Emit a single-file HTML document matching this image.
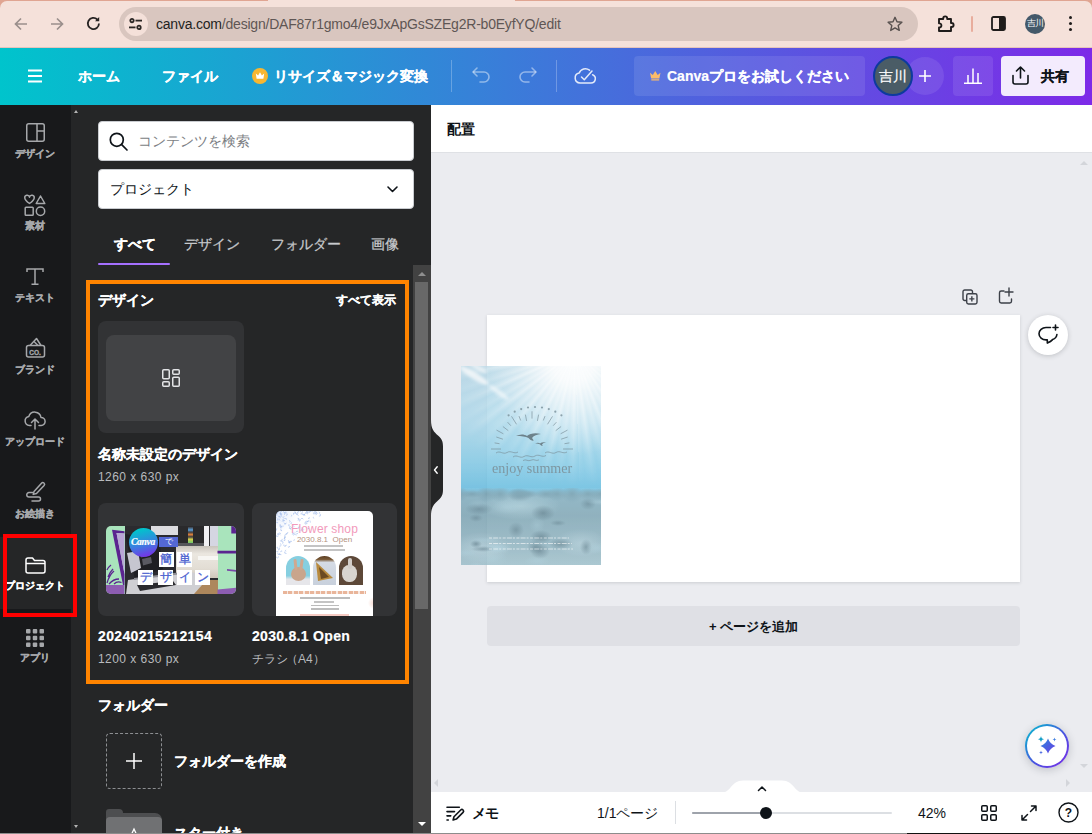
<!DOCTYPE html>
<html lang="ja">
<head>
<meta charset="utf-8">
<title>Canva</title>
<style>
*{box-sizing:border-box;margin:0;padding:0}
html,body{width:1092px;height:834px;overflow:hidden;background:#ebecf0}
body{font-family:"Liberation Sans",sans-serif;position:relative;color:#0e1318}
.a{position:absolute}
.t{position:absolute;white-space:nowrap;line-height:1}
svg{position:absolute;overflow:visible}
/* browser chrome */
#chrome{left:0;top:0;width:1092px;height:48px;background:#e0a592}
#chrome .bg{left:0;top:1px;width:1092px;height:47px;background:#f5e1da;border-radius:7px 7px 0 0}
#pill{left:119px;top:7px;width:799px;height:34px;border-radius:17px;background:#d9c6bf}
#tune{left:124px;top:12px;width:24px;height:24px;border-radius:50%;background:#f4e0d9}
/* canva header */
#hdr{left:0;top:48px;width:1092px;height:57px;z-index:5;background:linear-gradient(90deg,#00c4cc 0%,#7d2ae8 100%)}
#hdr .t{color:#fff;font-weight:bold;font-size:14px;-webkit-text-stroke:.2px currentColor}
.hb{position:absolute;background:rgba(255,255,255,.095);border-radius:4px}
/* nav */
#nav{left:0;top:104px;width:72px;height:729px;background:linear-gradient(90deg,#18191b 71px,#252627 71px)}
#nav .t{font-size:10px;font-weight:bold;color:#a6a8ab;width:72px;text-align:center;left:-1px;margin-top:1px;-webkit-text-stroke:.3px currentColor}
#panel{left:72px;top:104px;width:359px;height:729px;overflow:hidden;background:#252627}
#panel .t{color:#fff}
#panel .t[style*="bold"]{-webkit-text-stroke:.2px currentColor}
.card{position:absolute;background:#323335;border-radius:8px;overflow:hidden}
.tb{position:absolute;width:15px;height:15px;background:#fff;color:#4a5fd0;font-size:12px;line-height:15px;text-align:center;-webkit-text-stroke:.3px currentColor}
/* canvas */
#tb{left:431px;top:104px;width:661px;height:49px;background:#fff;border-bottom:1px solid #dfe1e5}
#bb{left:431px;top:792px;width:661px;height:41px;background:#fff}
#foot{left:0;top:833px;width:1092px;height:1px;background:#8c8c8c}
</style>
</head>
<body>
<!-- ================= BROWSER CHROME ================= -->
<div id="chrome" class="a">
  <div class="a bg"></div>
  <div class="a" style="left:0;top:47px;width:1092px;height:1px;background:#e6c4bb"></div>
  <div class="a" style="left:268px;top:0;width:247px;height:2px;background:#f5e1da"></div>
  <div id="pill" class="a"></div>
  <div id="tune" class="a"></div>
  <!-- back -->
  <svg style="left:14px;top:17px" width="14" height="14" viewBox="0 0 14 14" fill="none" stroke="#9a8f8c" stroke-width="1.7"><path d="M13 7H2M7 1.5L1.5 7 7 12.5"/></svg>
  <!-- forward -->
  <svg style="left:50px;top:17px" width="14" height="14" viewBox="0 0 14 14" fill="none" stroke="#9a8f8c" stroke-width="1.7"><path d="M1 7h11M7 1.5L12.5 7 7 12.5"/></svg>
  <!-- reload -->
  <svg style="left:86px;top:16px" width="15" height="15" viewBox="0 0 15 15" fill="none" stroke="#262322" stroke-width="1.8"><path d="M13 7.6a5.6 5.6 0 1 1-1.7-4.1"/><path d="M13.2 1v4.2H9" fill="#262322" stroke="none"/></svg>
  <!-- tune icon -->
  <svg style="left:129px;top:18px" width="13" height="12" viewBox="0 0 13 12" fill="none" stroke="#2a2624" stroke-width="1.8"><circle cx="3" cy="2.6" r="1.7"/><path d="M6.5 2.6H13"/><circle cx="10" cy="9.4" r="1.7"/><path d="M0 9.4h6.5"/></svg>
  <div class="t" id="url" style="left:156px;top:16px;font-size:14px;line-height:16px;color:#5f5654;letter-spacing:-.21px"><span style="color:#231f1e">canva.com</span>/design/DAF87r1gmo4/e9JxApGsSZEg2R-b0EyfYQ/edit</div>
  <!-- star -->
  <svg style="left:887px;top:16px" width="16" height="16" viewBox="0 0 16 16" fill="none" stroke="#57504e" stroke-width="1.4" stroke-linejoin="round"><path d="M8 1.3l2 4.5 4.9.5-3.7 3.3 1.1 4.8L8 11.9l-4.3 2.5 1.1-4.8L1.1 6.3l4.9-.5z"/></svg>
  <!-- puzzle -->
  <svg style="left:936px;top:14px" width="19" height="19" viewBox="0 0 19 19" fill="none" stroke="#1f1c1b" stroke-width="1.9" stroke-linejoin="round"><path d="M3 5h4.2v-.6a2 2 0 0 1 4 0V5H15v4h.6a2 2 0 0 1 0 4H15v4H3v-3.6c1.5.2 2.4-.8 2.4-2S4.500 9.200 3 9.400z"/></svg>
  <div class="a" style="left:971px;top:16px;width:2px;height:16px;background:#e8ad9d;border-radius:1px"></div>
  <!-- side panel -->
  <svg style="left:991px;top:16px" width="15" height="15" viewBox="0 0 15 15"><rect x="1" y="1" width="13" height="13" rx="1.5" fill="none" stroke="#1f1c1b" stroke-width="1.8"/><rect x="8" y="1" width="6" height="13" fill="#1f1c1b"/></svg>
  <div class="a" style="left:1025px;top:14px;width:20px;height:20px;border-radius:50%;background:#44596a"></div>
  <div class="t" style="left:1025px;top:19px;width:20px;text-align:center;font-size:9px;color:#fff;letter-spacing:-.5px">吉川</div>
  <div class="a" style="left:1069px;top:16px;width:3px;height:3px;border-radius:50%;background:#1f1c1b;box-shadow:0 6px 0 #1f1c1b,0 12px 0 #1f1c1b"></div>
</div>

<!-- ================= CANVA HEADER ================= -->
<div id="hdr" class="a">
  <svg style="left:28px;top:21px" width="14" height="14" viewBox="0 0 14 14" stroke="#fff" stroke-width="1.8"><path d="M0 1.500h14M0 7h14M0 12.500h14"/></svg>
  <div class="t" style="left:78px;top:21px">ホーム</div>
  <div class="t" style="left:162px;top:21px">ファイル</div>
  <svg style="left:252px;top:20px" width="16" height="16" viewBox="0 0 16 16"><circle cx="8" cy="8" r="8" fill="#f7b731"/><path d="M3.800 5.500l2.300 2L8 4.300l1.900 3.200 2.300-2-.8 5.300H4.600z" fill="#fff"/></svg>
  <div class="t" style="left:274px;top:21px">リサイズ＆マジック変換</div>
  <div class="a" style="left:451px;top:12px;width:1px;height:32px;background:rgba(255,255,255,.25)"></div>
  <!-- undo -->
  <svg style="left:472px;top:19px" width="19" height="16" viewBox="0 0 19 16" fill="none" stroke="rgba(255,255,255,.45)" stroke-width="1.6" stroke-linecap="round" stroke-linejoin="round"><path d="M5 1L1 5l4 4"/><path d="M1.500 5H12a5 5 0 0 1 0 10H8"/></svg>
  <!-- redo -->
  <svg style="left:518px;top:19px" width="19" height="16" viewBox="0 0 19 16" fill="none" stroke="rgba(255,255,255,.45)" stroke-width="1.6" stroke-linecap="round" stroke-linejoin="round"><path d="M14 1l4 4-4 4"/><path d="M17.500 5H7a5 5 0 0 0 0 10h4"/></svg>
  <div class="a" style="left:556px;top:12px;width:1px;height:32px;background:rgba(255,255,255,.25)"></div>
  <!-- cloud check -->
  <svg style="left:574px;top:19px" width="22" height="17" viewBox="0 0 22 17" fill="none" stroke="rgba(255,255,255,.85)" stroke-width="1.5" stroke-linecap="round" stroke-linejoin="round"><path d="M15.500 3.200A6.500 6.500 0 0 0 5.200 6.100 5 5 0 0 0 6 16h11a4.300 4.300 0 0 0 1.600-8.300"/><path d="M7.500 10l2.800 2.800L18 4"/></svg>
  <div class="hb" style="left:634px;top:8px;width:231px;height:40px"></div>
  <svg style="left:650px;top:22.500px" width="10.500" height="9.600" viewBox="0 0 12 11"><path d="M0 2l3.200 2.600L6 0l2.800 4.600L12 2l-1.300 6.500H1.300zM1.500 9.500h9V11h-9z" fill="#fdbc68"/></svg>
  <div class="t" style="left:667px;top:21px">Canvaプロをお試しください</div>
  <div class="a" style="left:906px;top:9px;width:38px;height:38px;border-radius:50%;background:rgba(255,255,255,.09)"></div>
  <svg style="left:919px;top:22px" width="12" height="12" viewBox="0 0 12 12" stroke="#fff" stroke-width="1.6"><path d="M6 0v12M0 6h12"/></svg>
  <div class="a" style="left:873px;top:8px;width:40px;height:40px;border-radius:50%;background:#4a5c66;border:2px solid #0d3a9e"></div>
  <div class="t" style="left:873px;top:21px;width:40px;text-align:center;font-size:14px;font-weight:normal">吉川</div>
  <div class="hb" style="left:953px;top:8px;width:40px;height:40px"></div>
  <svg style="left:964px;top:20px" width="18" height="16" viewBox="0 0 18 16" fill="none" stroke="#fff" stroke-width="1.5"><path d="M0 15.200h18M4 15V7M9 15V0.500M14 15V5"/></svg>
  <div class="a" style="left:1001px;top:8px;width:84px;height:40px;border-radius:4px;background:#f3ebfd"></div>
  <svg style="left:1012px;top:18px" width="17" height="19" viewBox="0 0 17 19" fill="none" stroke="#0e1318" stroke-width="1.6" stroke-linecap="round" stroke-linejoin="round"><path d="M8.500 12V1.200M4.500 5l4-4 4 4"/><path d="M1 9.500V16a2 2 0 0 0 2 2h11a2 2 0 0 0 2-2V9.500"/></svg>
  <div class="t" style="left:1041px;top:21px;color:#0e1318">共有</div>
</div>

<!-- ================= LEFT NAV ================= -->
<div id="nav" class="a">

  <!-- design -->
  <svg style="left:26px;top:19px" width="19" height="19" viewBox="0 0 19 19" fill="none" stroke="#a6a8ab" stroke-width="1.5"><rect x=".75" y=".75" width="17.500" height="17.500" rx="2"/><path d="M11 1v17M11 8h7.500"/></svg>
  <div class="t" style="top:44px">デザイン</div>
  <!-- elements -->
  <svg style="left:24px;top:91px" width="22" height="21" viewBox="0 0 22 21" fill="none" stroke="#a6a8ab" stroke-width="1.5" stroke-linejoin="round"><path d="M5.500 8.500C2 6 .8 4.600.8 3A2.200 2.200 0 0 1 5.500 2.200 2.200 2.200 0 0 1 10.200 3c0 1.600-1.200 3-4.700 5.500z"/><path d="M16.500 1l4.300 7.500h-8.600z"/><rect x="1.200" y="12.200" width="8" height="8" rx=".8"/><circle cx="16.500" cy="16.200" r="4.200"/></svg>
  <div class="t" style="top:116px">素材</div>
  <!-- text -->
  <svg style="left:26px;top:164px" width="18" height="17" viewBox="0 0 18 17" fill="none" stroke="#a6a8ab" stroke-width="1.500"><path d="M1 4V1h16v3M9 1v15M5.500 16.200h7"/></svg>
  <div class="t" style="top:188px">テキスト</div>
  <!-- brand -->
  <svg style="left:25px;top:233px" width="21" height="21" viewBox="0 0 21 21" fill="none" stroke="#a6a8ab" stroke-width="1.500" stroke-linejoin="round"><rect x="1.500" y="8.500" width="18" height="11.500" rx="2"/><path d="M5 8.500l6.500-7 4.500 7M9 4.500l4 4"/></svg>
  <div class="t" style="top:245px;font-size:6.500px;letter-spacing:0;color:#a6a8ab">CO.</div>
  <div class="t" style="top:260px">ブランド</div>
  <!-- upload -->
  <svg style="left:24px;top:306px" width="22" height="20" viewBox="0 0 22 20" fill="none" stroke="#a6a8ab" stroke-width="1.500" stroke-linecap="round" stroke-linejoin="round"><path d="M7 15.500H5.500A4.600 4.600 0 0 1 4.800 6.400 6.300 6.300 0 0 1 17 7.500a4 4 0 0 1 .2 8H15"/><path d="M11 19V9.500M7.500 12.500l3.500-3.500 3.500 3.500"/></svg>
  <div class="t" style="top:332px">アップロード</div>
  <!-- draw -->
  <svg style="left:25px;top:377px" width="22" height="21" viewBox="0 0 22 21" fill="none" stroke="#a6a8ab" stroke-width="1.500" stroke-linecap="round" stroke-linejoin="round"><path d="M9 10.500l7.500-8.300a1.700 1.700 0 0 1 2.600 2.300L11.500 12.500l-3.300.900z"/><path d="M7.500 11.500H4a2.200 2.200 0 0 0 0 4.500h9.500a2 2 0 0 1 0 4H7"/></svg>
  <div class="t" style="top:404px">お絵描き</div>
  <!-- projects (active) -->
  <div class="a" style="left:0;top:433px;width:72px;height:72px;background:#252627"></div>
  <svg style="left:25px;top:453px" width="21" height="17" viewBox="0 0 21 17" fill="none" stroke="#fff" stroke-width="1.500" stroke-linejoin="round"><path d="M1 3a2 2 0 0 1 2-2h4.500l2 2.500H18a2 2 0 0 1 2 2V14a2 2 0 0 1-2 2H3a2 2 0 0 1-2-2z"/><path d="M1 6.500h19"/></svg>
  <div class="t" style="top:476px;color:#fff">プロジェクト</div>
  <!-- apps -->
  <svg style="left:26px;top:525px" width="18" height="18" viewBox="0 0 18 18" fill="#a6a8ab"><rect x="0" y="0" width="4.500" height="4.500" rx="1"/><rect x="6.750" y="0" width="4.500" height="4.500" rx="1"/><rect x="13.500" y="0" width="4.500" height="4.500" rx="1"/><rect x="0" y="6.750" width="4.500" height="4.500" rx="1"/><rect x="6.750" y="6.750" width="4.500" height="4.500" rx="1"/><rect x="13.500" y="6.750" width="4.500" height="4.500" rx="1"/><rect x="0" y="13.500" width="4.500" height="4.500" rx="1"/><rect x="6.750" y="13.500" width="4.500" height="4.500" rx="1"/><rect x="13.500" y="13.500" width="4.500" height="4.500" rx="1"/></svg>
  <div class="t" style="top:548px">アプリ</div>

</div>

<!-- ================= SIDE PANEL ================= -->
<div id="panel" class="a">

  <!-- tiny outer scroll arrows -->
  <div class="a" style="left:1.700px;top:5.500px;border:2.800px solid transparent;border-top:0;border-bottom:3.700px solid #b4b4b4"></div>
  <div class="a" style="left:1.700px;top:720.500px;border:2.800px solid transparent;border-bottom:0;border-top:3.700px solid #b4b4b4"></div>
  <!-- search -->
  <div class="a" style="left:26px;top:17px;width:316px;height:40px;background:#fff;border-radius:4px;border:1px solid #c9ccd0"></div>
  <svg style="left:37px;top:28px" width="19" height="19" viewBox="0 0 19 19" fill="none" stroke="#0e1318" stroke-width="1.700" stroke-linecap="round"><circle cx="7.800" cy="7.800" r="6.500"/><path d="M12.700 12.700L18 18"/></svg>
  <div class="t" style="left:66px;top:30px;font-size:14px;color:#7b7e83 !important"><span style="color:#7b7e83">コンテンツを検索</span></div>
  <!-- dropdown -->
  <div class="a" style="left:26px;top:65px;width:316px;height:40px;background:#fff;border-radius:4px;border:1px solid #c9ccd0"></div>
  <div class="t" style="left:38px;top:78px;font-size:14px"><span style="color:#0e1318">プロジェクト</span></div>
  <svg style="left:315px;top:82px" width="11" height="7" viewBox="0 0 11 7" fill="none" stroke="#0e1318" stroke-width="1.600" stroke-linecap="round" stroke-linejoin="round"><path d="M1 1l4.500 4.500L10 1"/></svg>
  <!-- tabs -->
  <div class="t" style="left:42px;top:133px;font-size:14px;font-weight:bold">すべて</div>
  <div class="t" style="left:112px;top:133px;font-size:14px;color:#c8cacd;-webkit-text-stroke:.25px currentColor">デザイン</div>
  <div class="t" style="left:199px;top:133px;font-size:14px;color:#c8cacd;-webkit-text-stroke:.25px currentColor">フォルダー</div>
  <div class="t" style="left:299px;top:133px;font-size:14px;color:#c8cacd;-webkit-text-stroke:.25px currentColor">画像</div>
  <div class="a" style="left:26px;top:158.600px;width:72px;height:2.600px;background:#a570ff;border-radius:1px"></div>
  <!-- scrollbar -->
  <div class="a" style="left:341px;top:161px;width:18px;height:568px;background:#424242"></div>
  <div class="a" style="left:343px;top:178px;width:13px;height:327px;background:#686868"></div>
  <div class="a" style="left:346px;top:168px;border:4px solid transparent;border-top:0;border-bottom:4px solid #8f8f8f"></div>
  <div class="a" style="left:346px;top:718px;border:4px solid transparent;border-bottom:0;border-top:4px solid #fff"></div>
  <!-- section header -->
  <div class="t" style="left:26px;top:189px;font-size:14px;font-weight:bold">デザイン</div>
  <div class="t" style="left:264px;top:190px;font-size:12px;font-weight:bold">すべて表示</div>
  <!-- card 1 -->
  <div class="card" style="left:26px;top:217px;width:146px;height:112px">
    <div class="a" style="left:8px;top:14px;width:130px;height:86px;border-radius:8px;background:#424345"></div>
    <svg style="left:64px;top:48px" width="18" height="18" viewBox="0 0 18 18" fill="none" stroke="#e3e4e6" stroke-width="1.500"><rect x=".75" y=".75" width="6.500" height="9" rx="1"/><rect x="10.750" y=".75" width="6.500" height="4.500" rx="1"/><rect x=".75" y="12.750" width="6.500" height="4.500" rx="1"/><rect x="10.750" y="8.250" width="6.500" height="9" rx="1"/></svg>
  </div>
  <div class="t" style="left:26px;top:343px;font-size:14px;font-weight:bold">名称未設定のデザイン</div>
  <div class="t" style="left:26px;top:367px;font-size:12px"><span style="color:#b9bbbe;letter-spacing:.45px">1260 x 630 px</span></div>
  <!-- card 2 -->
  <div class="card" style="left:26px;top:399px;width:146px;height:113px">
    <div class="a" id="th2" style="left:8px;top:23px;width:130px;height:68px;border-radius:5px;overflow:hidden;background:#3b3b40">
      <div class="a" style="left:18px;top:0;width:94px;height:68px;background:#2b2b2f"></div>
      <div class="a" style="left:45px;top:0;width:27px;height:9px;background:#dcdcdf"></div>
      <div class="a" style="left:72px;top:0;width:26px;height:20px;background:#2a2a2c"></div>
      <div class="a" style="left:82px;top:1px;width:5px;height:17px;background:linear-gradient(180deg,#3d3d42 0,#5aa0d8 18%,#3d3d42 30%,#e0823a 45%,#3d3d42 58%,#d8d04a 72%,#7bc96a 90%)"></div>
      <div class="a" style="left:72px;top:17px;width:26px;height:3px;background:#55565a"></div>
      <div class="a" style="left:98px;top:0;width:14px;height:27px;background:linear-gradient(90deg,#f1f1f4 0,#f1f1f4 35%,#2e2e32 35%,#2e2e32 45%,#d5d6e2 45%)"></div>
      <div class="a" style="left:70px;top:20px;width:42px;height:32px;background:linear-gradient(180deg,#c9c4bc 0,#ebe7e0 25%,#e2ddd4 70%,#cfc7ba 100%)"></div>
      <div class="a" style="left:92px;top:30px;width:20px;height:4px;background:#f7f6f3"></div>
      <div class="a" style="left:86px;top:54px;width:26px;height:14px;background:#ad875c"></div>
      <svg style="left:0;top:0" width="130" height="68" viewBox="0 0 130 68">
        <path d="M19 8l34 5 4 30-28 10z" fill="#1f1f23"/>
        <path d="M21 27l11-2 3 17-10 5z" fill="#c6c6d0"/>
        <path d="M34 24l9-1.500 1 7-9 2zM36 33l9-2 1 6-9 2.500z" fill="#5a5a62"/>
        <path d="M22 54l62-8 20 4-16 18H20z" fill="#cfcfd3"/>
        <path d="M31 59l36-4 3 4-36 6z" fill="#2a2a2e"/>
        <path d="M28 52l56-7 1 2-57 7z" fill="#8e8e94"/>
      </svg>
      <div class="a" style="left:0;top:0;width:18.500px;height:68px;background:#a9e4bc"></div>
      <div class="a" style="left:111.500px;top:0;width:18.500px;height:68px;background:#a9e4bc"></div>
      <svg style="left:0;top:0" width="130" height="68" viewBox="0 0 130 68">
        <path d="M6 3.700l12.500 1.600V7.600L10.500 7 18.500 48v11H17z" fill="#5b2490"/>
        <path d="M10.500 7l8 .6V48z" fill="#b9a6d6"/>
        <path d="M0 59h18.500v9H0z" fill="#8d5db2"/>
        <path d="M1 57c1.500-5 3.500-9 7-12M3 58c3-3.500 6-5 10-5M2 51c1-3 2.500-5.500 5-8M8 58c2-2 5-2.500 7.500-1.500M1 44c1-2 2-3.500 4-5" stroke="#5b2490" stroke-width="1.300" fill="none"/>
        <path d="M125.300 0H130v7.600h-4.700z" fill="#5b2490"/><path d="M111.500 24.800H130v2.600h-18.500z" fill="#5b2490"/><path d="M121 43l9 1v1.800l-9-1z" fill="#7a4aa8"/>
        <path d="M111.500 63.500L130 61.700V68h-18.500z" fill="#8d5db2"/>
      </svg>
      <div class="a" style="left:22.500px;top:1.500px;width:29px;height:29px;border-radius:50%;background:linear-gradient(165deg,#00c4cc 12%,#3a80e0 55%,#7d2ae8 95%)"></div>
      <div class="t" style="left:22.500px;top:11.500px;width:29px;text-align:center;font-family:'Liberation Serif',serif;font-style:italic;font-weight:bold;font-size:9.500px;color:#fff;letter-spacing:-.3px">Canva</div>
      <div class="a" style="left:53px;top:10.500px;width:19px;height:10.500px;background:#5468d4"></div>
      <div class="t" style="left:53px;top:12px;width:19px;text-align:center;font-size:8px;color:#fff">で</div>
      <div class="tb" style="left:52.500px;top:26px">簡</div><div class="tb" style="left:71px;top:26px">単</div>
      <div class="tb" style="left:32.300px;top:44.300px">デ</div><div class="tb" style="left:52px;top:44.300px">ザ</div><div class="tb" style="left:71px;top:44.300px">イ</div><div class="tb" style="left:89.300px;top:44.300px">ン</div>
    </div>
  </div>
  <!-- card 3 -->
  <div class="card" style="left:180px;top:399px;width:145px;height:113px">
    <div class="a" id="fly" style="left:24px;top:8px;width:97px;height:110px;border-radius:5px;overflow:hidden;background:#fff">
      <svg style="left:0;top:0" width="52" height="54" viewBox="0 0 52 54" fill="none" stroke="#9db8ea" stroke-width=".7" opacity=".85"><path d="M5.6 20.1Q6.1 18.4 4.0 18.9M23.8 0.8Q24.8 1.0 24.4 -0.2M6.3 5.7Q4.8 3.2 3.2 6.3M24.5 2.9Q26.6 3.7 26.2 1.1M26.4 0.8Q26.9 -1.6 24.1 -0.7M7.9 0.3Q6.6 -2.0 5.0 0.8M11.9 35.8Q13.2 37.2 13.8 35.0M39.5 1.5Q38.4 2.2 39.9 3.0M23.8 8.3Q22.0 7.3 22.1 9.7M10.0 22.4Q11.7 23.6 11.9 21.0M26.4 3.3Q27.9 5.5 29.2 2.6M28.9 4.9Q29.2 2.3 26.4 3.6M7.3 0.8Q8.4 3.2 10.2 0.6M1.3 35.8Q0.3 37.3 2.4 37.5M7.6 33.7Q7.9 36.3 10.5 34.5M23.1 0.5Q20.8 0.2 21.8 2.8M8.3 1.1Q8.6 3.2 10.6 1.5M4.2 13.0Q3.0 14.8 5.6 15.0M0.4 40.4Q1.4 41.7 2.2 39.9M15.0 18.8Q15.5 16.6 12.9 17.3M20.1 24.4Q19.2 21.8 17.0 24.3M13.6 30.6Q12.1 30.6 13.1 32.2M19.5 0.1Q19.7 -1.8 17.7 -0.9M0.1 24.2Q0.1 26.4 2.4 25.1M23.9 15.9Q21.6 15.3 22.3 18.0M0.2 0.7Q1.5 2.6 2.6 0.2M6.0 15.4Q3.9 15.3 5.0 17.6M10.5 8.7Q10.9 7.0 8.9 7.6M7.9 11.6Q8.4 14.0 10.6 12.0M8.3 5.2Q6.0 6.3 8.5 8.0M3.9 14.4Q3.3 16.6 6.0 15.9M8.8 9.6Q7.0 7.8 6.1 10.7M38.0 3.5Q38.9 2.1 36.9 2.0M5.1 2.1Q3.6 3.5 5.9 4.2M3.8 7.4Q5.0 5.2 2.0 5.2M34.7 10.1Q33.4 10.3 34.4 11.6M34.0 7.1Q32.6 6.0 32.3 8.0M13.1 13.1Q11.5 15.3 14.7 15.6M0.0 45.8Q1.2 48.2 3.0 45.6M42.9 5.2Q45.3 5.6 44.3 2.9M25.9 18.7Q24.3 18.4 25.0 20.2M5.2 0.9Q3.1 1.2 4.7 3.2M35.0 0.5Q37.0 -1.3 34.0 -2.3M0.1 32.2Q-1.3 32.3 -0.4 33.6M25.9 19.0Q27.2 20.3 27.8 18.3M23.0 10.0Q24.4 10.5 24.1 8.7M10.0 4.4Q12.1 4.5 10.9 2.3M3.4 35.2Q6.1 35.2 4.4 32.4M35.9 0.0Q38.0 0.8 37.5 -1.8M0.5 7.1Q0.2 5.5 -1.2 6.8M13.2 16.3Q14.1 18.6 16.0 16.3M0.6 2.3Q0.5 3.6 1.9 2.9M1.2 17.8Q-0.4 17.7 0.5 19.5M10.0 26.0Q8.0 25.3 8.5 27.8M4.0 9.4Q4.0 8.1 2.6 8.9M29.1 11.7Q28.2 12.6 29.7 12.9M10.9 23.5Q8.7 22.4 8.9 25.4M13.6 11.4Q15.2 10.1 13.0 9.3M13.1 28.9Q11.3 29.7 13.2 31.0M18.8 29.0Q17.9 28.2 17.6 29.6M6.4 15.8Q7.7 15.8 7.0 14.5M1.6 22.5Q1.0 23.5 2.3 23.5M32.7 0.5Q32.4 1.7 33.8 1.3M39.7 3.8Q40.8 4.0 40.3 2.7M2.0 38.8Q4.3 39.1 3.3 36.6M34.3 0.3Q33.5 -2.0 31.5 0.2M29.0 1.7Q30.7 3.5 31.5 0.7M0.7 9.2Q2.8 9.5 1.8 7.2M5.7 3.8Q6.3 2.4 4.4 2.7M31.4 12.4Q29.9 11.4 29.9 13.5M10.0 13.5Q9.5 12.4 8.6 13.5M31.0 3.2Q33.2 2.5 31.1 0.6M26.6 18.6Q27.5 16.9 25.2 16.9M40.8 2.9Q42.0 2.4 40.8 1.5M14.2 30.5Q12.8 30.8 14.0 32.0M4.3 22.4Q2.8 23.2 4.5 24.2M7.7 29.6Q9.5 30.1 8.9 28.0M21.5 6.9Q21.8 8.3 23.1 7.1M15.9 11.8Q14.6 11.4 15.0 13.0M8.8 34.1Q9.3 35.3 10.3 34.0M15.9 23.2Q17.8 23.5 17.0 21.3M16.0 30.6Q13.8 29.2 13.7 32.3M15.3 5.5Q16.6 4.7 15.0 3.9M37.9 6.0Q36.5 6.4 37.8 7.5M3.9 29.6Q6.1 31.0 6.2 27.9M6.2 40.2Q4.9 39.2 4.6 41.1M29.9 1.3Q31.1 1.5 30.6 0.1M7.6 10.7Q9.0 9.1 6.5 8.5M0.0 9.7Q-0.8 8.0 -2.0 9.9M4.6 22.4Q2.2 21.0 2.2 24.3M19.3 2.1Q20.3 0.8 18.4 0.6M1.8 41.8Q1.2 44.4 4.3 43.5M7.7 27.8Q10.0 27.7 8.6 25.4M6.6 32.7Q8.4 30.6 5.1 30.0M18.8 1.9Q16.9 1.4 17.5 3.7M20.5 3.9Q21.4 1.9 18.8 2.1M3.6 42.0Q2.8 44.1 5.4 43.7M43.2 2.7Q44.6 1.8 42.8 0.8M22.2 20.7Q20.8 18.9 19.8 21.3M8.4 3.7Q9.4 3.0 8.1 2.4M30.5 10.8Q29.1 10.1 29.2 11.9M39.1 0.4Q37.3 1.2 39.2 2.6M32.4 10.5Q31.0 9.6 30.8 11.6M10.1 39.0Q8.8 39.3 9.9 40.4M1.5 1.9Q3.7 0.7 1.1 -0.8M3.8 4.1Q5.5 3.4 3.7 2.1M21.9 2.8Q20.5 4.0 22.6 4.7M18.4 21.4Q17.0 21.9 18.4 23.0M33.2 0.3Q35.4 1.5 35.3 -1.5M19.7 22.3Q20.8 24.2 22.2 21.9M27.3 8.2Q26.1 5.9 24.4 8.5M0.0 33.8Q-0.9 31.7 -2.5 33.9M18.2 15.6Q17.9 14.2 16.6 15.3M0.3 17.7Q-1.1 16.0 -2.0 18.6M40.4 2.5Q41.4 0.2 38.4 0.6M0.5 10.8Q0.4 12.3 2.0 11.6M8.8 40.6Q7.8 42.7 10.5 42.5M30.5 10.1Q32.4 11.8 33.1 8.9M31.6 16.9Q31.7 18.2 33.0 17.3M1.0 4.5Q0.5 3.2 -0.5 4.5"/></svg>
      <div class="a" style="left:0;top:0;width:30px;height:30px;background:radial-gradient(circle 22px at 0 0,rgba(170,195,240,.35),rgba(170,195,240,0))"></div>
      <div class="t" id="fs" style="left:0;top:11.500px;width:97px;text-align:center;font-size:12px;color:#f29abb;letter-spacing:.15px">Flower shop</div>
      <div class="t" style="left:0;top:24.500px;width:97px;text-align:center;font-size:8px;color:#b39280">2030.8.1&nbsp; Open</div>
      <div class="a" style="left:28px;top:34px;width:39px;height:1.500px;background:#c4c4c4"></div>
      <div class="a" style="left:28px;top:38px;width:41px;height:1.500px;background:#c4c4c4"></div>
      <div class="a" style="left:10px;top:45px;width:24px;height:29px;border-radius:12px 12px 0 0;overflow:hidden;background:linear-gradient(180deg,#86cfe0 0,#86cfe0 68%,#e6e6ea 80%)">
        <div class="a" style="left:5px;top:11px;width:15px;height:14px;border-radius:50%;background:#c9a58c"></div>
        <div class="a" style="left:8px;top:3px;width:3px;height:11px;border-radius:2px;background:#cfa890;transform:rotate(-6deg)"></div>
        <div class="a" style="left:14px;top:3px;width:3px;height:11px;border-radius:2px;background:#cfa890;transform:rotate(8deg)"></div>
      </div>
      <div class="a" style="left:37px;top:45px;width:23px;height:29px;border-radius:12px 12px 0 0;overflow:hidden;background:linear-gradient(180deg,#5a3d22 0,#7a5a38 12%,#d5dbe5 22%,#c8d0dc 100%)">
        <svg style="left:0;top:0" width="23" height="29" viewBox="0 0 23 29"><path d="M3 6l17 16-15 3z" fill="#b88a3e"/><path d="M6 11l10 10-8 2z" fill="#6b4a22"/></svg>
      </div>
      <div class="a" style="left:63px;top:45px;width:24px;height:29px;border-radius:12px 12px 0 0;overflow:hidden;background:#5d4838">
        <div class="a" style="left:3px;top:9px;width:15px;height:17px;border-radius:45%;background:#d8d4cf"></div>
        <div class="a" style="left:9px;top:2px;width:4px;height:11px;border-radius:2px;background:#d2cdc8"></div>
      </div>
      <div class="a" style="left:7px;top:80px;width:83px;height:2.500px;background:repeating-linear-gradient(90deg,#e9b59a 0,#e9b59a 4px,rgba(233,181,154,.3) 4px,rgba(233,181,154,.3) 5.500px)"></div>
      <div class="a" style="left:24px;top:86px;width:50px;height:1.500px;background:#bcbcbc"></div>
      <div class="a" style="left:38px;top:90px;width:20px;height:1.500px;background:#c4c4c4"></div>
      <div class="a" style="left:35px;top:93.500px;width:28px;height:1.500px;background:#bcbcbc"></div>
      <div class="a" style="left:35px;top:97px;width:28px;height:1.500px;background:#bcbcbc"></div>
      <div class="a" style="left:24px;top:103px;width:49px;height:4px;background:#f6cbc3"></div>
      <div class="a" style="left:91px;top:84px;width:8px;height:16px;background:radial-gradient(circle 6px at 7px 8px,rgba(240,190,175,.6),rgba(240,190,175,0))"></div>

    </div>
  </div>
  <div class="t" style="left:26px;top:525px;font-size:14px;font-weight:bold;letter-spacing:.36px">20240215212154</div>
  <div class="t" style="left:26px;top:549px;font-size:12px"><span style="color:#b9bbbe;letter-spacing:.45px">1200 x 630 px</span></div>
  <div class="t" style="left:180px;top:525px;font-size:14px;font-weight:bold;letter-spacing:.3px">2030.8.1 Open</div>
  <div class="t" style="left:180px;top:549px;font-size:12px"><span style="color:#b9bbbe">チラシ<span style="margin-left:-2px">（</span>A4）</span></div>
  <!-- orange highlight -->
  <div class="a" style="left:14px;top:176px;width:323px;height:404px;border:4px solid #ff8400"></div>
  <!-- folders -->
  <div class="t" style="left:26px;top:594px;font-size:14px;font-weight:bold">フォルダー</div>
  <div class="a" style="left:34px;top:629px;width:56px;height:56px;border:1px dashed #8d8f92;border-radius:4px"></div>
  <svg style="left:54px;top:649px" width="16" height="16" viewBox="0 0 16 16" stroke="#fff" stroke-width="1.500"><path d="M8 0v16M0 8h16"/></svg>
  <div class="t" style="left:102px;top:650px;font-size:14px;font-weight:bold">フォルダーを作成</div>
  <div class="a" style="left:34px;top:709px;width:56px;height:30px;background:#4d4e50;border-radius:0 7px 0 0"></div>
  <div class="a" style="left:34px;top:705px;width:17px;height:8px;background:#4d4e50;border-radius:3px 4px 0 0"></div>
  <div class="a" style="left:34px;top:713px;width:56px;height:30px;background:#707173;border-radius:4px 4px 0 0"></div>
  <svg style="left:58px;top:724px" width="8" height="8" viewBox="0 0 8 8" fill="none" stroke="#fff" stroke-width="1.300"><path d="M1 7.500L4 1l3 6.500"/></svg>
  <div class="t" style="left:102px;top:722px;font-size:14px;font-weight:bold">スター付き</div>

</div>

<div class="a" style="left:3px;top:534px;width:74px;height:83px;border:4px solid #ff0000"></div>

<!-- ================= CANVAS AREA ================= -->
<div id="tb" class="a"><div class="t" style="left:16px;top:18px;font-size:14px;font-weight:bold;color:#0e1318">配置</div></div>

<!-- page -->
<div class="a" style="left:487px;top:315px;width:533px;height:267px;background:#fff;box-shadow:0 1px 3px rgba(60,64,72,.18)"></div>
<!-- dragged beach image -->
<div class="a" id="beach" style="left:461px;top:366px;width:140px;height:199px;overflow:hidden;opacity:.82">
  <div class="a" style="left:0;top:0;width:140px;height:199px;background:linear-gradient(180deg,#8cc0d8 0,#84c4df 22%,#6fc1e1 48%,#5fb9de 61.500%,#74a5b8 65%,#6b98a9 75%,#76a1b1 88%,#86afbd 100%)"></div>
  <div class="a" style="left:0;top:0;width:140px;height:130px;background:repeating-conic-gradient(from 178deg at 114px -14px,rgba(255,255,255,0) 0deg,rgba(255,255,255,.5) 3deg,rgba(255,255,255,.05) 6.500deg,rgba(255,255,255,.32) 9deg,rgba(255,255,255,0) 13deg);-webkit-mask-image:radial-gradient(ellipse 150px 135px at 114px -14px,#000 0,rgba(0,0,0,.75) 45%,rgba(0,0,0,0) 100%);mask-image:radial-gradient(ellipse 150px 135px at 114px -14px,#000 0,rgba(0,0,0,.75) 45%,rgba(0,0,0,0) 100%)"></div>
  <div class="a" style="left:0;top:0;width:140px;height:120px;background:radial-gradient(ellipse 85px 100px at 112px -10px,rgba(255,255,255,1) 0,rgba(255,255,255,.88) 28%,rgba(255,255,255,.4) 62%,rgba(255,255,255,0) 100%)"></div>
  <div class="a" style="left:0;top:0;width:140px;height:125px;background:linear-gradient(180deg,rgba(255,255,255,.34) 0,rgba(255,255,255,.3) 45%,rgba(255,255,255,.12) 75%,rgba(255,255,255,0) 100%)"></div>
  <div class="a" style="left:0;top:122px;width:140px;height:77px;background:linear-gradient(180deg,rgba(255,255,255,.05),rgba(255,255,255,.16)),radial-gradient(ellipse 40px 14px at 60px 18px,rgba(190,225,235,.45),rgba(190,225,235,0)),radial-gradient(ellipse 30px 16px at 20px 60px,rgba(200,228,238,.4),rgba(200,228,238,0)),radial-gradient(ellipse 26px 14px at 120px 55px,rgba(200,228,238,.35),rgba(200,228,238,0))"></div>
  <div class="a" style="left:-4px;top:6px;width:34px;height:7px;border-radius:50%;background:rgba(255,255,255,.75);transform:rotate(32deg);filter:blur(1.500px)"></div>
  <div class="a" style="left:2px;top:-2px;width:26px;height:5px;border-radius:50%;background:rgba(255,255,255,.6);transform:rotate(30deg);filter:blur(1.500px)"></div>
  <div class="a" style="left:26px;top:24px;width:24px;height:5px;border-radius:50%;background:rgba(255,255,255,.6);transform:rotate(36deg);filter:blur(1.500px)"></div>
  <div class="a" style="left:0;top:122px;width:140px;height:80px;background:
    radial-gradient(ellipse 11px 8px at -3px 6px,rgba(104,150,168,.95),rgba(104,150,168,0) 100%),
    radial-gradient(ellipse 11px 4px at 11px 6px,rgba(104,150,168,.95),rgba(104,150,168,0) 100%),
    radial-gradient(ellipse 11px 8px at 26px 6px,rgba(104,150,168,.95),rgba(104,150,168,0) 100%),
    radial-gradient(ellipse 11px 8px at 39px 6px,rgba(104,150,168,.95),rgba(104,150,168,0) 100%),
    radial-gradient(ellipse 11px 6px at 57px 6px,rgba(104,150,168,.95),rgba(104,150,168,0) 100%),
    radial-gradient(ellipse 11px 4px at 67px 6px,rgba(104,150,168,.95),rgba(104,150,168,0) 100%),
    radial-gradient(ellipse 11px 5px at 85px 6px,rgba(104,150,168,.95),rgba(104,150,168,0) 100%),
    radial-gradient(ellipse 11px 7px at 96px 6px,rgba(104,150,168,.95),rgba(104,150,168,0) 100%),
    radial-gradient(ellipse 11px 9px at 111px 6px,rgba(104,150,168,.95),rgba(104,150,168,0) 100%),
    radial-gradient(ellipse 11px 6px at 127px 6px,rgba(104,150,168,.95),rgba(104,150,168,0) 100%),
    radial-gradient(ellipse 11px 6px at 140px 6px,rgba(104,150,168,.95),rgba(104,150,168,0) 100%),
    radial-gradient(ellipse 12px 8px at 82px 25px,rgba(58,92,108,0.56),rgba(58,92,108,0)),
    radial-gradient(ellipse 15px 3px at 24px 52px,rgba(165,205,220,0.35),rgba(165,205,220,0)),
    radial-gradient(ellipse 12px 3px at 22px 61px,rgba(58,92,108,0.49),rgba(58,92,108,0)),
    radial-gradient(ellipse 7px 4px at 15px 78px,rgba(165,205,220,0.45),rgba(165,205,220,0)),
    radial-gradient(ellipse 6px 4px at 15px 56px,rgba(58,92,108,0.56),rgba(58,92,108,0)),
    radial-gradient(ellipse 8px 7px at 74px 59px,rgba(58,92,108,0.43),rgba(58,92,108,0)),
    radial-gradient(ellipse 15px 7px at 46px 19px,rgba(165,205,220,0.39),rgba(165,205,220,0)),
    radial-gradient(ellipse 15px 3px at 140px 14px,rgba(165,205,220,0.42),rgba(165,205,220,0)),
    radial-gradient(ellipse 11px 6px at 136px 60px,rgba(165,205,220,0.41),rgba(165,205,220,0)),
    radial-gradient(ellipse 8px 8px at 76px 37px,rgba(165,205,220,0.32),rgba(165,205,220,0)),
    radial-gradient(ellipse 13px 5px at 76px 73px,rgba(165,205,220,0.37),rgba(165,205,220,0)),
    radial-gradient(ellipse 14px 6px at 18px 21px,rgba(58,92,108,0.44),rgba(58,92,108,0)),
    radial-gradient(ellipse 6px 8px at 125px 59px,rgba(58,92,108,0.49),rgba(58,92,108,0)),
    radial-gradient(ellipse 11px 7px at 80px 49px,rgba(58,92,108,0.55),rgba(58,92,108,0)),
    radial-gradient(ellipse 10px 6px at 17px 17px,rgba(165,205,220,0.32),rgba(165,205,220,0)),
    radial-gradient(ellipse 10px 8px at 79px 63px,rgba(58,92,108,0.52),rgba(58,92,108,0)),
    radial-gradient(ellipse 11px 4px at 5px 65px,rgba(165,205,220,0.42),rgba(165,205,220,0)),
    radial-gradient(ellipse 8px 8px at 55px 42px,rgba(58,92,108,0.45),rgba(58,92,108,0)),
    radial-gradient(ellipse 8px 6px at 127px 16px,rgba(58,92,108,0.42),rgba(58,92,108,0)),
    radial-gradient(ellipse 14px 5px at 35px 61px,rgba(165,205,220,0.55),rgba(165,205,220,0)),
    radial-gradient(ellipse 8px 3px at 97px 35px,rgba(58,92,108,0.41),rgba(58,92,108,0)),
    radial-gradient(ellipse 13px 7px at 59px 7px,rgba(58,92,108,0.42),rgba(58,92,108,0)),
    radial-gradient(ellipse 14px 5px at 37px 59px,rgba(165,205,220,0.38),rgba(165,205,220,0)),
    radial-gradient(ellipse 15px 8px at 32px 71px,rgba(165,205,220,0.31),rgba(165,205,220,0)),
    radial-gradient(ellipse 12px 6px at 100px 56px,rgba(58,92,108,0.51),rgba(58,92,108,0)),
    radial-gradient(ellipse 7px 4px at 15px 30px,rgba(58,92,108,0.38),rgba(58,92,108,0))"></div>
  <svg style="left:0;top:0" width="140" height="199" viewBox="0 0 140 199"><g transform="translate(0,3)">
    <g stroke="#5d7884" stroke-width=".8" fill="none" opacity=".85"><path d="M40.0 80.0L30.0 80.0M38.5 74.7L33.6 73.9M41.9 70.2L35.3 68.0M42.4 64.8L35.5 61.1M47.3 61.7L41.9 57.5M49.8 56.7L46.6 53.2M55.5 55.3L50.5 47.3M59.7 51.5L58.0 47.1M65.6 51.9L64.4 45.6M71.0 49.6L71.0 42.3M76.4 51.9L77.6 45.6M82.3 51.5L84.0 47.1M86.5 55.3L91.5 47.3M92.2 56.7L95.4 53.2M94.7 61.7L100.1 57.5M99.6 64.8L106.5 61.1M100.1 70.2L106.7 68.0M103.5 74.7L108.4 73.9M102.0 80.0L112.0 80.0"/></g>
    <g fill="#5d7884" opacity=".8"><circle cx="47.6" cy="46.3" r="1.1"/><circle cx="53.7" cy="42.7" r="1.1"/><circle cx="60.2" cy="40.1" r="1.1"/><circle cx="67.0" cy="38.5" r="1.1"/><circle cx="74.0" cy="38.0" r="1.1"/><circle cx="81.0" cy="38.5" r="1.1"/><circle cx="87.8" cy="40.1" r="1.1"/><circle cx="94.3" cy="42.7" r="1.1"/><circle cx="100.4" cy="46.3" r="1.1"/></g>
    <path d="M55 67c4-2 8-2 11 0 3-2.500 8-3.500 14-2-4 .3-7 1.500-9 4 1 1 1.500 2 1.500 3-2-.5-4-1.500-5-3-3-1.500-7-2-12.500-2z" fill="#4e6772"/>
    <path d="M74 74.500c2-1 4-1 5 0 1.500-1.200 3.500-1.600 6-1-2 .2-3 .8-4 2 .4.500.6 1 .6 1.500-1-.2-2-.7-2.500-1.500-1.300-.7-2.800-1-5.100-1z" fill="#4e6772"/>
    <g stroke="#5d7884" stroke-width=".8" fill="none" opacity=".85"><path d="M35 84c4-3 7 2 11-.5s7 2 11-.5M84 84c4-3 7 2 11-.5s7 2 11-.5M52 88c4-3 7 2 11-.5s7 2 11-.5s7 2 11-.5M62 91.500c3-2 5 1.500 8-.3s5 1.500 8-.3"/></g>
    </g><g stroke="#fff" stroke-width="1.100" opacity=".6" stroke-dasharray="3 1.200 5 1 2 1.500"><path d="M28 172h80M28 177.500h83M28 183h84"/></g>
  </svg>
  <div class="t" style="left:31px;top:95px;font-family:'Liberation Serif',serif;font-size:15px;color:#62808d;transform:scaleX(.94);transform-origin:0 0" id="enjoy">enjoy summer</div>
</div>
<!-- page action icons -->
<svg style="left:962px;top:289px" width="16" height="16" viewBox="0 0 16 16" fill="none" stroke="#3c4048" stroke-width="1.400" stroke-linejoin="round"><path d="M4 11.500H2.700A1.700 1.700 0 0 1 1 9.800V2.700A1.700 1.700 0 0 1 2.700 1h6.100a1.700 1.700 0 0 1 1.700 1.700V4"/><rect x="4.700" y="4.700" width="10.300" height="10.300" rx="1.700"/><path d="M9.850 7.300v5.100M7.300 9.850h5.100"/></svg>
<svg style="left:998px;top:287px" width="17" height="17" viewBox="0 0 17 17" fill="none" stroke="#3c4048" stroke-width="1.400" stroke-linecap="round" stroke-linejoin="round"><path d="M6 4H3.200A1.700 1.700 0 0 0 1.500 5.700v8.600A1.700 1.700 0 0 0 3.200 16h8.600a1.700 1.700 0 0 0 1.700-1.700V12"/><path d="M11 1v8M7 5h8"/></svg>
<!-- comment bubble -->
<div class="a" style="left:1028px;top:315px;width:40px;height:40px;border-radius:50%;background:#fff;box-shadow:0 1px 5px rgba(40,44,52,.22)"></div>
<svg style="left:1036px;top:323px" width="24" height="24" viewBox="0 0 24 24" fill="none" stroke="#0e1318" stroke-width="1.600" stroke-linecap="round" stroke-linejoin="round"><path d="M14.500 4.500H10a7 6.200 0 0 0 0 12.400h1.300v3.200c2.200-1 4-2.100 5.300-3.500 2.300-.9 4-2.800 4.300-5.100"/><path d="M19.500 2v5M17 4.500h5"/></svg>
<!-- add page -->
<div class="a" style="left:487px;top:606px;width:533px;height:40px;border-radius:4px;background:#dfe0e5"></div>
<div class="t" style="left:487px;top:620px;width:533px;text-align:center;font-size:13px;font-weight:bold;color:#0e1318">+ ページを追加</div>
<!-- magic button -->
<div class="a" style="left:1025px;top:724px;width:44px;height:44px;border-radius:50%;background:linear-gradient(135deg,#00c4cc,#4a53e0 55%,#7d2ae8);box-shadow:0 2px 8px rgba(40,44,60,.22)"></div>
<div class="a" style="left:1027px;top:726px;width:40px;height:40px;border-radius:50%;background:#fff"></div>
<svg style="left:1035px;top:734px" width="24" height="24" viewBox="0 0 24 24"><defs><linearGradient id="mg" x1="0" y1="0" x2="1" y2="1"><stop offset="0" stop-color="#2a8fdc"/><stop offset=".5" stop-color="#4a5fe0"/><stop offset="1" stop-color="#6b3fe6"/></linearGradient></defs><path d="M13 4.500Q15 10 20.500 12 15 14 13 19.500 11 14 5.500 12 11 10 13 4.500z" fill="url(#mg)"/><path d="M6 2c.4 2.200 1 2.800 3.200 3.200C7 5.600 6.400 6.200 6 8.400 5.600 6.200 5 5.600 2.800 5.200 5 4.800 5.600 4.200 6 2z" fill="#159fc8"/><path d="M19.500 3.500c.25 1.400.6 1.750 2 2-1.400.25-1.750.6-2 2-.25-1.400-.6-1.750-2-2 1.400-.25 1.750-.6 2-2z" fill="#3f7fe0"/><path d="M6 16.500c.25 1.400.6 1.750 2 2-1.400.25-1.750.6-2 2-.25-1.400-.6-1.750-2-2 1.400-.25 1.750-.6 2-2z" fill="#4a6ae0"/></svg>
<!-- scroll hints -->
<div class="a" style="left:1080px;top:161px;border:4px solid transparent;border-top:0;border-bottom:4px solid #d3d5da"></div>
<div class="a" style="left:1080px;top:764px;border:4px solid transparent;border-bottom:0;border-top:4px solid #d3d5da"></div>
<div class="a" style="left:434px;top:779px;border:4px solid transparent;border-left:0;border-right:4px solid #d3d5da"></div>
<div class="a" style="left:1066px;top:779px;border:4px solid transparent;border-right:0;border-left:4px solid #d3d5da"></div>
<!-- collapse handle -->
<svg style="left:431px;top:420px" width="13" height="96" viewBox="0 0 13 96"><path d="M0 0c0 9 3 12 7 15.500 4 3.500 5 6 5 11V69.500c0 5-1 7.500-5 11C3 84 0 87 0 96z" fill="#252627"/><path d="M6.200 46.800L3.500 50 6.200 53.200" fill="none" stroke="#fff" stroke-width="1.400" stroke-linecap="round" stroke-linejoin="round"/></svg>
<!-- bottom notch -->
<svg style="left:719px;top:780px" width="87" height="13" viewBox="0 0 87 13"><path d="M0 13c6 0 8-1.500 11.500-5.500S18 .5 24 .5h39c6 0 9 3 12.500 7S81 13 87 13z" fill="#fff"/><path d="M39.500 10.500L43 7l3.500 3.500" fill="none" stroke="#0e1318" stroke-width="1.500" stroke-linecap="round" stroke-linejoin="round"/></svg>

<div id="bb" class="a">

  <svg style="left:15px;top:14px" width="18.500" height="15" viewBox="0 0 17 14" fill="none" stroke="#0e1318" stroke-width="1.500" stroke-linecap="round" stroke-linejoin="round"><path d="M.8 1.200h11.500M.8 5.200h7M.8 9.200h3.500M.8 13h1.200"/><path d="M6.500 13l.8-3 6.300-6.300a1.500 1.500 0 0 1 2.200 2.200L9.500 12.200z"/></svg>
  <div class="t" style="left:41px;top:14px;font-size:14px;font-weight:bold;color:#0e1318;letter-spacing:-1px">メモ</div>
  <div class="t" style="left:166px;top:14px;font-size:14px;color:#0e1318">1/1ページ</div>
  <div class="a" style="left:244px;top:9px;width:1px;height:23px;background:#dcdfe3"></div>
  <div class="a" style="left:261px;top:20px;width:200px;height:2px;background:#dcdfe3;border-radius:1px"></div>
  <div class="a" style="left:261px;top:20px;width:74px;height:2px;background:#9ea3ab;border-radius:1px"></div>
  <div class="a" style="left:329px;top:15px;width:12px;height:12px;border-radius:50%;background:#0e1318"></div>
  <div class="t" style="left:487px;top:14px;font-size:14px;color:#0e1318">42%</div>
  <svg style="left:550px;top:13px" width="16" height="16" viewBox="0 0 16 16" fill="none" stroke="#0e1318" stroke-width="1.500"><rect x=".75" y=".75" width="5.500" height="5.500" rx="1"/><rect x="9.750" y=".75" width="5.500" height="5.500" rx="1"/><rect x=".75" y="9.750" width="5.500" height="5.500" rx="1"/><rect x="9.750" y="9.750" width="5.500" height="5.500" rx="1"/></svg>
  <svg style="left:590px;top:13px" width="16" height="16" viewBox="0 0 16 16" fill="none" stroke="#0e1318" stroke-width="1.500" stroke-linecap="round" stroke-linejoin="round"><path d="M10.500 1H15v4.500M15 1L9.500 6.500M5.500 15H1v-4.500M1 15l5.500-5.500"/></svg>
  <svg style="left:627px;top:10px" width="21" height="21" viewBox="0 0 21 21" fill="none" stroke="#0e1318" stroke-width="1.400"><circle cx="10.500" cy="10.500" r="9.500"/></svg>
  <div class="t" style="left:627px;top:15px;width:21px;text-align:center;font-size:12px;font-weight:bold;color:#0e1318">?</div>

</div>
<div id="foot" class="a"></div>
<div class="a" style="left:907px;top:833px;width:185px;height:1px;background:#111"></div>
</body>
</html>
